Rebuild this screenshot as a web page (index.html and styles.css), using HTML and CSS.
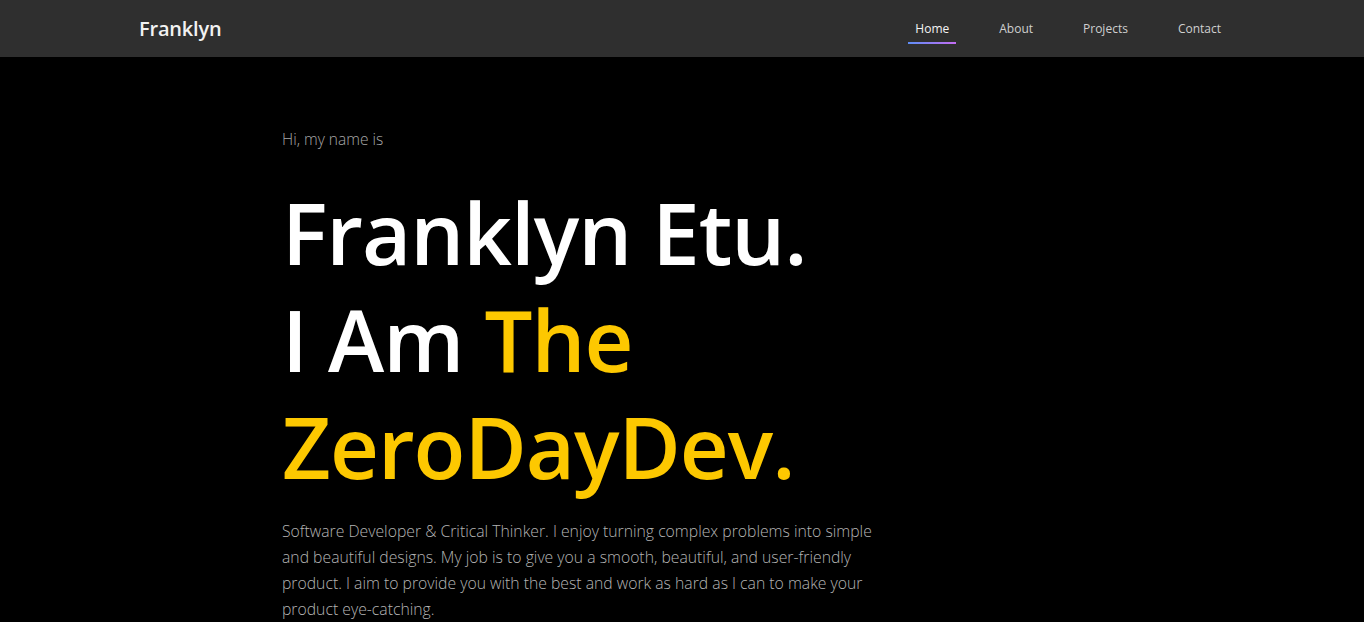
FILE: index.html
```html
<!DOCTYPE html>
<html lang="en">
<head>
<meta charset="utf-8">
<title>Franklyn</title>
<link rel="stylesheet" href="styles.css">
</head>
<body>
<header class="navbar">
  <div class="nav-inner">
    <a class="logo" href="#">Franklyn</a>
    <nav class="nav-links">
      <a class="nav-link active" href="#">Home</a>
      <a class="nav-link" href="#">About</a>
      <a class="nav-link" href="#">Projects</a>
      <a class="nav-link" href="#">Contact</a>
    </nav>
  </div>
</header>
<main class="hero">
  <p class="intro">Hi, my name is</p>
  <h1 class="title">Franklyn Etu.<br>I Am <span class="accent">The ZeroDayDev.</span></h1>
  <p class="desc">Software Developer &amp; Critical Thinker. I enjoy turning complex problems into simple and beautiful designs. My job is to give you a smooth, beautiful, and user-friendly product. I aim to provide you with the best and work as hard as I can to make your product eye-catching.</p>
</main>
</body>
</html>
```
FILE: styles.css
```css
* { box-sizing: border-box; }
html, body { margin: 0; padding: 0; }
body {
  background: #000;
  color: #fff;
  font-family: "Open Sans", "Noto Sans", sans-serif;
  overflow: hidden;
}
a { text-decoration: none; color: inherit; }
.navbar {
  background: #2f2f2f;
  height: 57px;
}
.nav-inner {
  height: 100%;
  display: flex;
  align-items: center;
  justify-content: space-between;
  padding: 0 136px 0 139px;
}
.logo {
  font-size: 20px;
  font-weight: 600;
  color: #f2f2f2;
  letter-spacing: -0.2px;
}
.nav-links {
  display: flex;
  gap: 36px;
  align-items: center;
}
.nav-link {
  font-size: 12px;
  color: #d0d0d0;
  padding: 6px 7px;
  position: relative;
}
.nav-link.active { color: #f4f4f4; }
.nav-link.active::after {
  content: "";
  position: absolute;
  left: 0;
  right: 0;
  bottom: -1px;
  height: 2px;
  background: linear-gradient(90deg, #5e8ef6, #c46cf2);
}
.hero {
  padding: 71px 0 0 282px;
}
.intro {
  margin: 0;
  font-size: 15.5px;
  font-weight: 300;
  color: #a8a8a8;
  line-height: 22px;
}
.title {
  margin: 29px 0 0;
  font-size: 85px;
  font-weight: 600;
  line-height: 107px;
  letter-spacing: -1px;
  color: #fff;
  max-width: 560px;
}
.accent { color: #fdc800; }
.desc {
  margin: 18px 0 0;
  max-width: 600px;
  font-size: 15.75px;
  font-weight: 300;
  line-height: 26px;
  color: #b4b4b4;
}
```
